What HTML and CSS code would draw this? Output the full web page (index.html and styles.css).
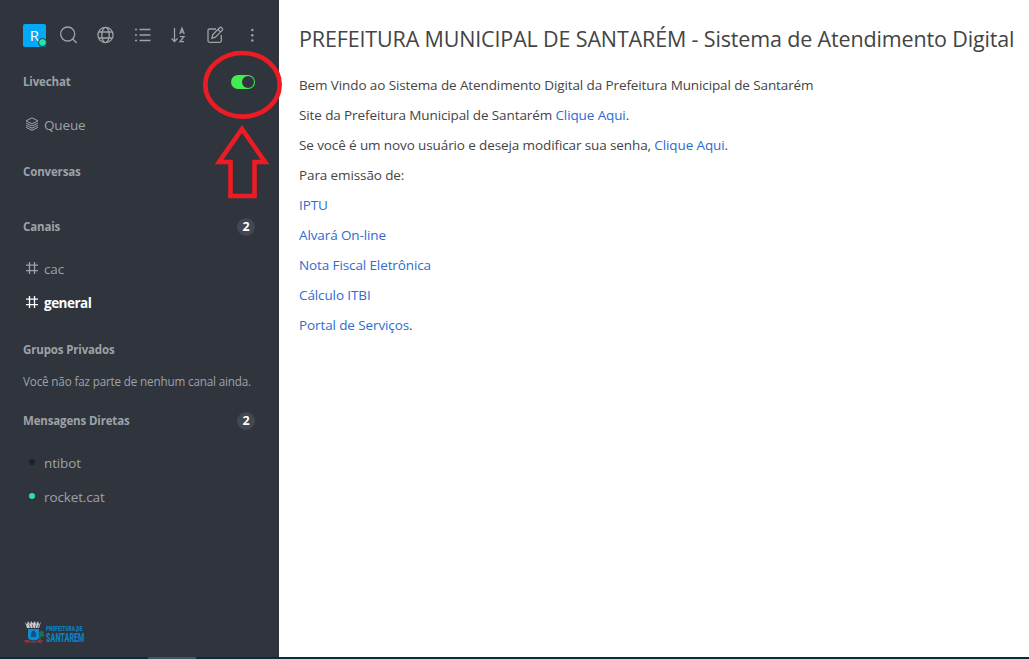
FILE: index.html
```html
<!DOCTYPE html>
<html lang="pt-BR">
<head>
<meta charset="utf-8">
<title>Sistema de Atendimento Digital</title>
<link rel="stylesheet" href="styles.css">
</head>
<body>
<div class="app">
  <aside class="sidebar">
    <header class="toolbar">
      <div class="avatar">R<span class="avatar-status"></span></div>
      <svg class="tool" viewBox="0 0 20 20"><circle cx="8.700" cy="9" r="7"/><path d="M13.700 14l4 4"/></svg>
      <svg class="tool" viewBox="0 0 20 20"><circle cx="10.5" cy="10" r="7.6"/><ellipse cx="10.5" cy="10" rx="3.7" ry="7.6"/><path d="M3.7 7h13.6M3.7 13h13.6"/></svg>
      <svg class="tool" viewBox="0 0 20 20"><path d="M6.5 4.5h11M6.500 10h11M6.500 15.500h11M2 4.500h2M2 10h2M2 15.500h2"/></svg>
      <svg class="tool" viewBox="0 0 20 20"><path d="M6.500 3v13.500M3.500 13.500l3 3 3-3M11.800 9l2.200-5.800L16.200 9M12.500 7.200h3M12 11.700h4l-4 5h4"/></svg>
      <svg class="tool" viewBox="0 0 20 20"><path d="M11 4H4.500Q3 4 3 5.500v10.300q0 1.500 1.500 1.500h10.300q1.500 0 1.500-1.500V10M7 13.200l.8-3.600 6.800-6.800q1-1 2 0l.6.6q1 1 0 2l-6.800 6.800zM13 4.500l2.600 2.600"/></svg>
      <svg class="tool tool-solid" viewBox="0 0 20 20"><circle cx="10.300" cy="5" r="1.250"/><circle cx="10.300" cy="10.300" r="1.250"/><circle cx="10.300" cy="15.600" r="1.250"/></svg>
    </header>

    <h3 class="section livechat"><span>Livechat</span><span class="toggle"><i class="knob"></i></span></h3>
    <div class="item queue">
      <svg class="item-icon" viewBox="0 0 14 14"><path d="M7 .8l6 3-6 3-6-3zM1 6l6 3 6-3M1 8.200l6 3 6-3M1 10.300l6 3 6-3"/></svg>
      <span>Queue</span>
    </div>
    <h3 class="section talks"><span>Conversas</span></h3>

    <h3 class="section channels"><span>Canais</span><span class="badge">2</span></h3>
    <div class="item first">
      <svg class="item-icon" viewBox="0 0 14 14"><path d="M4.500 1v12M9.500 1v12M1 4.200h12M1 9.700h12"/></svg>
      <span>cac</span>
    </div>
    <div class="item unread">
      <svg class="item-icon" viewBox="0 0 14 14"><path d="M4.500 1v12M9.500 1v12M1 4.200h12M1 9.700h12"/></svg>
      <span>general</span>
    </div>

    <h3 class="section groups"><span>Grupos Privados</span></h3>
    <p class="empty"><span>Você não faz parte de nenhum canal ainda.</span></p>

    <h3 class="section direct"><span>Mensagens Diretas</span><span class="badge">2</span></h3>
    <div class="item first"><i class="presence offline"></i><span>ntibot</span></div>
    <div class="item"><i class="presence online"></i><span>rocket.cat</span></div>

    <footer class="brand">
      <svg class="crest" viewBox="0 0 20 28" preserveAspectRatio="none">
        <path class="crown" d="M1 2l2 3 1-4 2 4 1-4 2 3 2-3 1 4 2-4 1 4 2-3-2 7H3z"/>
        <path class="crown-gap" d="M5 5l1.500 4M8.300 5l.7 4M12 5l-.7 4M15 5l-1.500 4"/>
        <path class="shield" d="M4 10h11v10q-1 3-5.500 3T4 20z"/>
        <path class="tower" d="M8 12h3v2h1v5H7v-5h1z"/>
        <path class="leaf" d="M15 15q2-3 4-1-2 0-2 2 3 0 2 2l-3-1v5"/>
        <path class="ribbon" d="M0 24q4-2 5 0 4 1.500 9 0 1-2 5 0M4 24l-2 2M15 24l2 2"/>
      </svg>
      <div class="brand-name"><span class="brand-top">PREFEITURA DE</span><span class="brand-main">SANTARÉM</span></div>
    </footer>

    <svg class="marker" viewBox="0 0 90 160">
      <ellipse cx="42.500" cy="39.800" rx="37.200" ry="31.800"/>
      <path d="M42 84L65 117H54.500V151H30.500V117H19Z"/>
    </svg>
  </aside>

  <main class="content">
    <h1 class="title">PREFEITURA MUNICIPAL DE SANTARÉM - Sistema de Atendimento Digital</h1>
    <p>Bem Vindo ao Sistema de Atendimento Digital da Prefeitura Municipal de Santarém</p>
    <p>Site da Prefeitura Municipal de Santarém <a>Clique Aqui</a>.</p>
    <p>Se você é um novo usuário e deseja modificar sua senha, <a>Clique Aqui</a>.</p>
    <p>Para emissão de:</p>
    <p><a>IPTU</a></p>
    <p><a>Alvará On-line</a></p>
    <p><a>Nota Fiscal Eletrônica</a></p>
    <p><a>Cálculo ITBI</a></p>
    <p><a>Portal de Serviços</a>.</p>
  </main>
</div>
<div class="taskbar"><div class="task"></div></div>
</body>
</html>
```
FILE: styles.css
```css
* { box-sizing: border-box; }
body {
  margin: 0;
  height: 659px;
  display: flex;
  flex-direction: column;
  overflow: hidden;
  background: #fff;
  font-family: "Open Sans", "Noto Sans", sans-serif;
}
h1, h3, p { margin: 0; }
.app { display: flex; height: 657px; }
.sidebar {
  position: relative;
  display: flex;
  flex-direction: column;
  flex: none;
  width: 279px;
  background: #2f343d;
  color: #9ea2a8;
}
.toolbar {
  display: grid;
  grid-template-columns: 36px 36px 38px 35px 37px 37px 20px;
  align-items: center;
  height: 70px;
  padding-left: 23px;
}
.avatar {
  position: relative;
  width: 23px;
  height: 23px;
  border-radius: 2px;
  background: #03a9f4;
  color: #fff;
  font-size: 15px;
  line-height: 23px;
  text-align: center;
}
.avatar-status {
  position: absolute;
  right: -1px;
  bottom: 0;
  width: 9px;
  height: 9px;
  border: 1px solid #2f343d;
  border-radius: 50%;
  background: #2de0a5;
}
.tool, .item-icon { fill: none; stroke: currentColor; stroke-width: 1.300; }
.tool { width: 20px; height: 20px; }
.tool-solid { fill: currentColor; stroke: none; }
.section {
  display: flex;
  align-items: center;
  justify-content: space-between;
  height: 24px;
  padding: 0 24px 0 23px;
  font-size: 11.500px;
  line-height: 24px;
  font-weight: 700;
  letter-spacing: -0.150px;
}
.toggle {
  display: flex;
  justify-content: flex-end;
  align-items: center;
  width: 24px;
  height: 14px;
  padding-right: 1px;
  border-radius: 7px;
  background: #41ed50;
}
.knob { width: 12px; height: 12px; border-radius: 50%; background: #2f343d; }
.badge {
  width: 18px;
  height: 18px;
  margin-top: -1px;
  border-radius: 9px;
  background: #414852;
  color: #fff;
  font-size: 12.500px;
  font-weight: 700;
  line-height: 18px;
  text-align: center;
}
.item {
  display: flex;
  align-items: center;
  gap: 5px;
  height: 34px;
  padding-left: 25px;
  font-size: 13.500px;
  line-height: 34px;
  letter-spacing: -0.130px;
}
.item-icon { width: 14px; height: 14px; margin-top: -2px; }
.queue { margin-top: 14px; }
.queue .item-icon { stroke-width: 1; }
.talks { margin-top: 18px; }
.channels { margin-top: 31px; }
.first { margin-top: 13px; }
.unread { color: #fff; font-weight: 700; letter-spacing: -0.500px; }
.groups { margin-top: 18px; }
.empty {
  height: 24px;
  margin-top: 8px;
  padding-left: 23px;
  font-size: 11.700px;
  line-height: 23px;
  letter-spacing: -0.170px;
  white-space: nowrap;
}
.direct { margin-top: 15px; }
.presence { width: 6px; height: 6px; margin: -2px 4px 0; border-radius: 50%; }
.offline { background: #1f2329; }
.online { background: #2de0a5; }
.brand { display: flex; gap: 2px; margin: auto 0 12px 24px; height: 25px; }
.crest { width: 20px; height: 25px; }
.crown { fill: #c9cbce; }
.crown-gap { fill: none; stroke: #2f343d; stroke-width: .7; }
.shield { fill: #0b8bd0; }
.tower { fill: #174e83; }
.leaf { fill: none; stroke: #26734b; stroke-width: 1.500; }
.ribbon { fill: none; stroke: #943542; stroke-width: 1.500; }
.brand-name {
  display: flex;
  flex-direction: column;
  align-items: flex-start;
  padding-top: 4px;
  color: #0b80c0;
  font-family: Roboto, sans-serif;
  font-weight: 900;
  white-space: nowrap;
}
.brand-top, .brand-main { transform-origin: 0 50%; }
.brand-top { font-size: 8px; line-height: 9px; transform: scaleX(.620); }
.brand-main { font-size: 12px; line-height: 10px; transform: scaleX(.600); }
.marker {
  position: absolute;
  left: 200px;
  top: 45px;
  width: 90px;
  height: 160px;
  fill: none;
  stroke: #ed1c24;
  stroke-width: 4.600;
}
.content { flex: 1; padding: 18px 0 0 20px; color: #444; white-space: nowrap; }
.title { height: 52px; font-size: 21.500px; font-weight: 400; line-height: 42px; letter-spacing: -0.150px; }
.content p { height: 30px; font-size: 13.500px; line-height: 30px; letter-spacing: -0.110px; }
.content a { color: #2f6bd0; }
.taskbar { height: 2px; background: #072c3b; }
.task { width: 48px; height: 2px; margin-left: 148px; background: #3c5963; }
```
